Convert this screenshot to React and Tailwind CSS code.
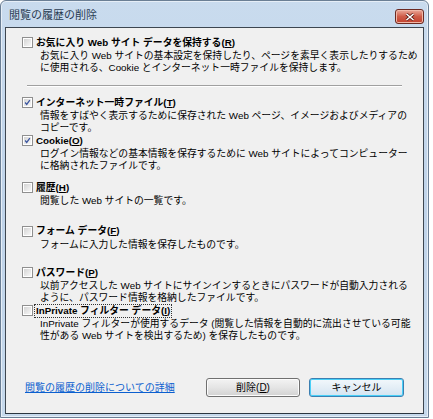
import React from "react";

const font = { fontFamily: '"Liberation Sans", "Noto Sans CJK JP", sans-serif' };

const Checkbox = ({ checked }) => (
  <div className="w-[11px] h-[11px] border border-[#8f8f8f] bg-white p-[1px] shrink-0">
    <div className="w-full h-full bg-gradient-to-br from-[#d4d4d4] to-[#f7f7f7] flex items-center justify-center">
      {checked && (
        <svg width="9" height="9" viewBox="0 0 9 9">
          <path d="M1.5 4.5 L3.5 7 L7.5 1.5" fill="none" stroke="#3a55a0" strokeWidth="1.6" />
        </svg>
      )}
    </div>
  </div>
);

const Row = ({ checked, label, lines, mt, focus }) => (
  <div className={mt}>
    <div className="flex items-center h-[13px] ml-[16px]">
      <Checkbox checked={checked} />
      <span
        className={
          "ml-[2px] px-[1px] font-bold text-[9.8px] leading-[12px] text-black whitespace-nowrap " +
          (focus ? "outline outline-1 outline-dotted outline-[#333]" : "")
        }
      >
        {label}
      </span>
    </div>
    <div className="ml-[34px] mt-[1px] text-[9.8px] leading-[11.5px] text-black">
      {lines.map((l, i) => (
        <div key={i} className="whitespace-nowrap">{l}</div>
      ))}
    </div>
  </div>
);

const U = ({ children }) => <span className="underline">{children}</span>;

export default function App() {
  return (
    <div className="w-[433px] h-[419px] bg-white" style={font}>
      <div className="w-[429px] h-[418px] rounded-t-[6px] border border-[#6b7f95] bg-gradient-to-b from-[#c9dbee] via-[#bfd3e9] to-[#c6d9ec] flex flex-col px-[4px] pb-[3px] shadow-[inset_0_0_0_1px_#e6eef7]">
        {/* title bar */}
        <div className="h-[26px] flex items-start justify-between shrink-0">
          <span className="ml-[4px] mt-[8px] text-[11px] leading-[13px] text-[#2a3c52]">閲覧の履歴の削除</span>
          <div className="mt-[8px] w-[29px] h-[15px] rounded-[3px] border border-[#6b2a22] bg-gradient-to-b from-[#e9a89a] via-[#cf5c48] to-[#c0402e] flex items-center justify-center shadow-[inset_0_0_0_1px_#f0b8a8]">
            <svg width="10" height="8" viewBox="0 0 10 8">
              <path d="M1.5 1 L8.5 7 M8.5 1 L1.5 7" stroke="#5a1a12" strokeWidth="3" />
              <path d="M1.5 1 L8.5 7 M8.5 1 L1.5 7" stroke="#ffffff" strokeWidth="1.6" />
            </svg>
          </div>
        </div>

        {/* content panel */}
        <div className="flex-1 bg-[#f0f0f0] border border-[#3d4650] flex flex-col border-b-[#2b3540]">
          <Row
            mt="mt-[8px]"
            label={<>お気に入り Web サイト データを保持する(<U>R</U>)</>}
            lines={[
              "お気に入り Web サイトの基本設定を保持したり、ページを素早く表示したりするため",
              "に使用される、Cookie とインターネット一時ファイルを保持します。",
            ]}
          />
          <div className="mt-[12px] mx-[21px] h-[2px] border-t border-[#a0a0a0] border-b border-b-white" />
          <Row
            mt="mt-[9px]"
            checked
            label={<>インターネット一時ファイル(<U>T</U>)</>}
            lines={[
              "情報をすばやく表示するために保存された Web ページ、イメージおよびメディアの",
              "コピーです。",
            ]}
          />
          <Row
            mt="mt-[1px]"
            checked
            label={<>Cookie(<U>O</U>)</>}
            lines={[
              "ログイン情報などの基本情報を保存するために Web サイトによってコンピューター",
              "に格納されたファイルです。",
            ]}
          />
          <Row
            mt="mt-[10px]"
            label={<>履歴(<U>H</U>)</>}
            lines={["閲覧した Web サイトの一覧です。"]}
          />
          <Row
            mt="mt-[18px]"
            label={<>フォーム データ(<U>F</U>)</>}
            lines={["フォームに入力した情報を保存したものです。"]}
          />
          <Row
            mt="mt-[16px]"
            label={<>パスワード(<U>P</U>)</>}
            lines={[
              "以前アクセスした Web サイトにサインインするときにパスワードが自動入力される",
              "ように、パスワード情報を格納したファイルです。",
            ]}
          />
          <Row
            mt="mt-[1px]"
            focus
            label={<>InPrivate フィルター データ(<U>I</U>)</>}
            lines={[
              "InPrivate フィルターが使用するデータ (閲覧した情報を自動的に流出させている可能",
              "性がある Web サイトを検出するため) を保存したものです。",
            ]}
          />

          {/* bottom */}
          <div className="mt-auto mb-[16px] flex items-center px-[19px]">
            <span className="text-[10px] leading-[13px] text-[#0b5fcf] underline whitespace-nowrap">
              閲覧の履歴の削除についての詳細
            </span>
            <div className="ml-auto flex gap-[9px]">
              <div className="w-[94px] h-[19px] rounded-[3px] border border-[#707070] bg-gradient-to-b from-[#f3f3f3] via-[#e5e5e5] to-[#d2d2d2] shadow-[inset_0_0_0_1px_#fcfcfc] flex items-center justify-center text-[10px] text-black">
                削除(<U>D</U>)
              </div>
              <div className="w-[95px] h-[19px] rounded-[3px] border border-[#3c7fb1] bg-gradient-to-b from-[#f2f8fc] via-[#e4eef6] to-[#d3e4f1] shadow-[inset_0_0_0_1px_#48d0f8] flex items-center justify-center text-[10px] text-black">
                キャンセル
              </div>
            </div>
          </div>
        </div>
      </div>
    </div>
  );
}
